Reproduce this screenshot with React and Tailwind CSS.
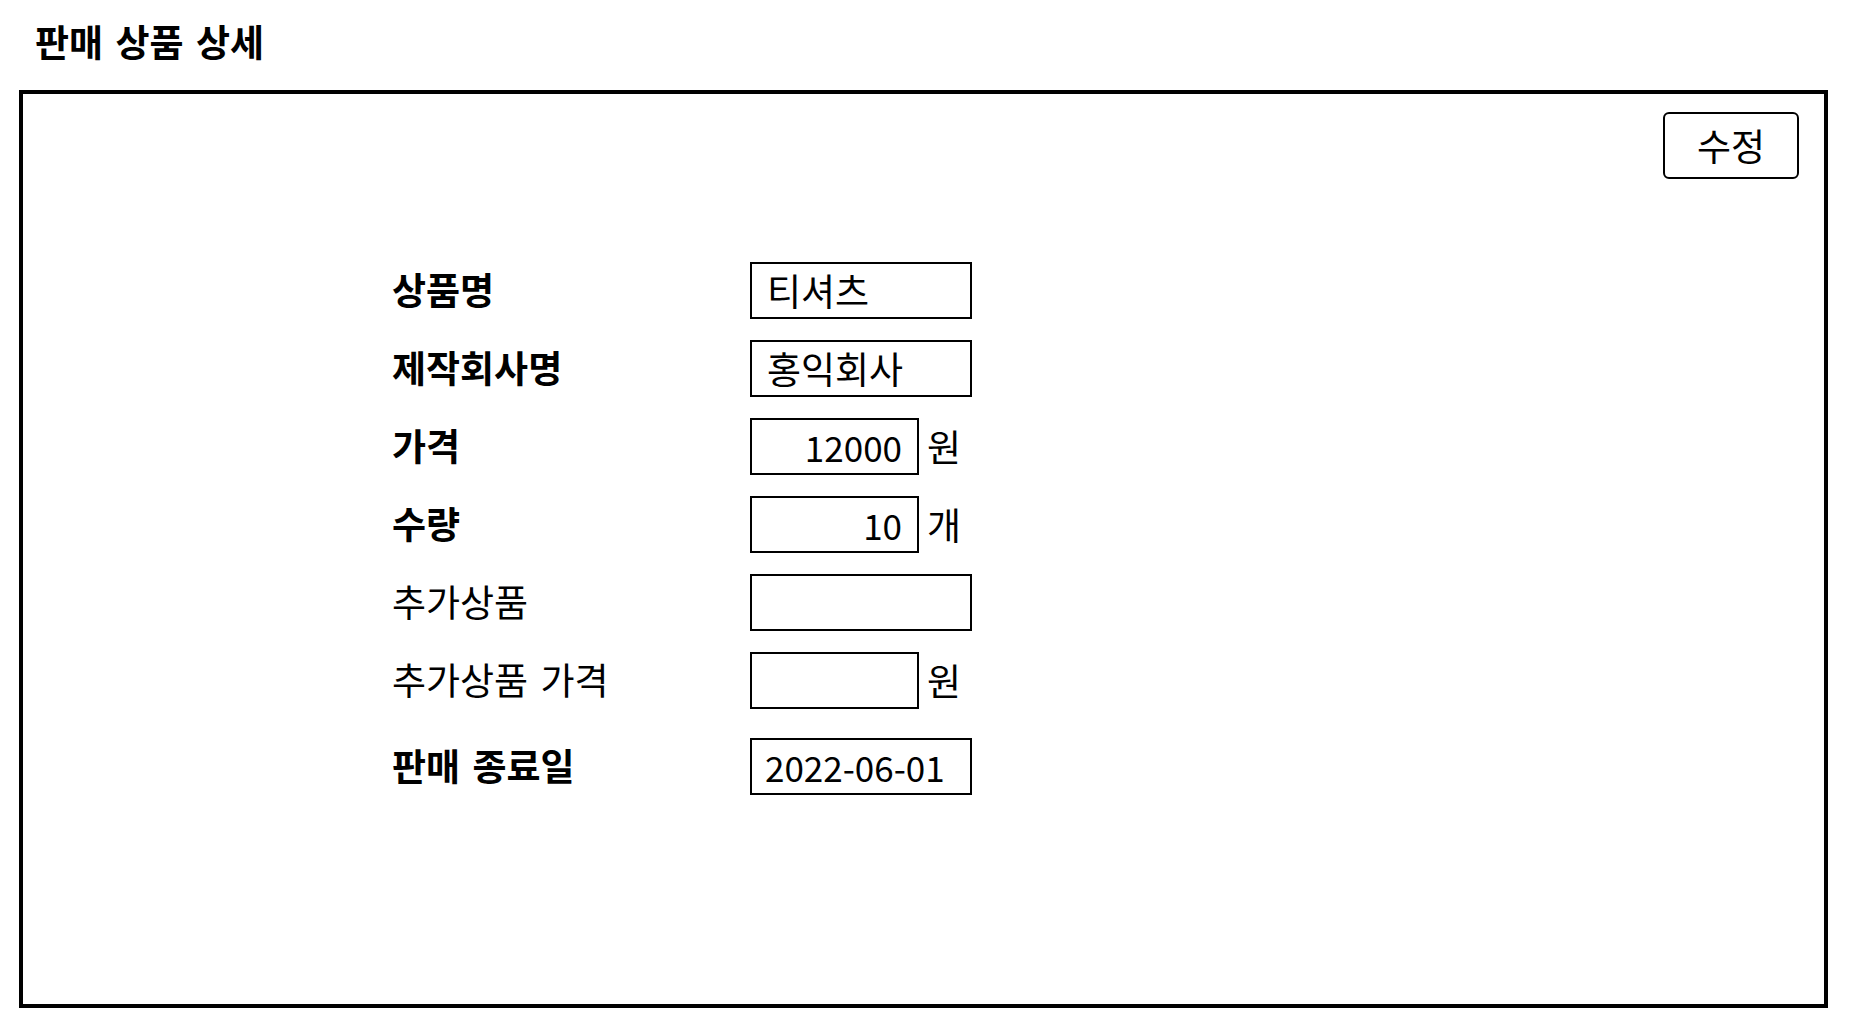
const rows = [
  { label: '상품명', bold: true, value: '티셔츠', wide: true },
  { label: '제작회사명', bold: true, value: '홍익회사', wide: true },
  { label: '가격', bold: true, value: '12000', unit: '원', number: true },
  { label: '수량', bold: true, value: '10', unit: '개', number: true },
  { label: '추가상품', bold: false, value: '', wide: true },
  { label: '추가상품 가격', bold: false, value: '', unit: '원', number: true },
]

function Field({ value, wide }) {
  return (
    <div
      className={`h-[57px] border-2 border-black flex items-center ${
        wide ? 'w-[222px] pl-[15px]' : 'w-[169px] justify-end pr-[15px] text-[35px]'
      }`}
    >
      {value}
    </div>
  )
}

export default function App() {
  return (
    <div className="min-h-screen bg-white text-black font-['Noto_Sans_CJK_KR',sans-serif] text-[37px] leading-none">
      {/* Header */}
      <div className="h-[90px] flex items-center pl-[35px] pb-[8px]">
        <h1 className="font-bold text-[37px] [word-spacing:4px]">판매 상품 상세</h1>
      </div>

      {/* Detail panel */}
      <div className="ml-[19px] w-[1809px] h-[918px] border-4 border-black flex flex-col">
        <div className="flex justify-end pt-[18px] pr-[25px]">
          <button className="w-[136px] h-[67px] border-2 border-black rounded-[6px] flex items-center justify-center">
            수정
          </button>
        </div>

        <div className="mt-[83px] pl-[369px] flex flex-col gap-[21px]">
          {rows.map((row) => (
            <div key={row.label} className="flex items-center h-[57px]">
              <div className={`w-[358px] shrink-0 pb-[2px] [word-spacing:4px] ${row.bold ? 'font-bold' : ''}`}>
                {row.label}
              </div>
              <Field value={row.value} wide={row.wide} />
              {row.unit && <span className="ml-[8px]">{row.unit}</span>}
            </div>
          ))}

          <div className="flex items-center h-[57px] mt-[8px]">
            <div className="w-[358px] shrink-0 pb-[2px] font-bold [word-spacing:4px]">판매 종료일</div>
            <div className="w-[222px] h-[57px] border-2 border-black flex items-center pl-[13px] text-[35px]">
              2022-06-01
            </div>
          </div>
        </div>
      </div>
    </div>
  )
}
